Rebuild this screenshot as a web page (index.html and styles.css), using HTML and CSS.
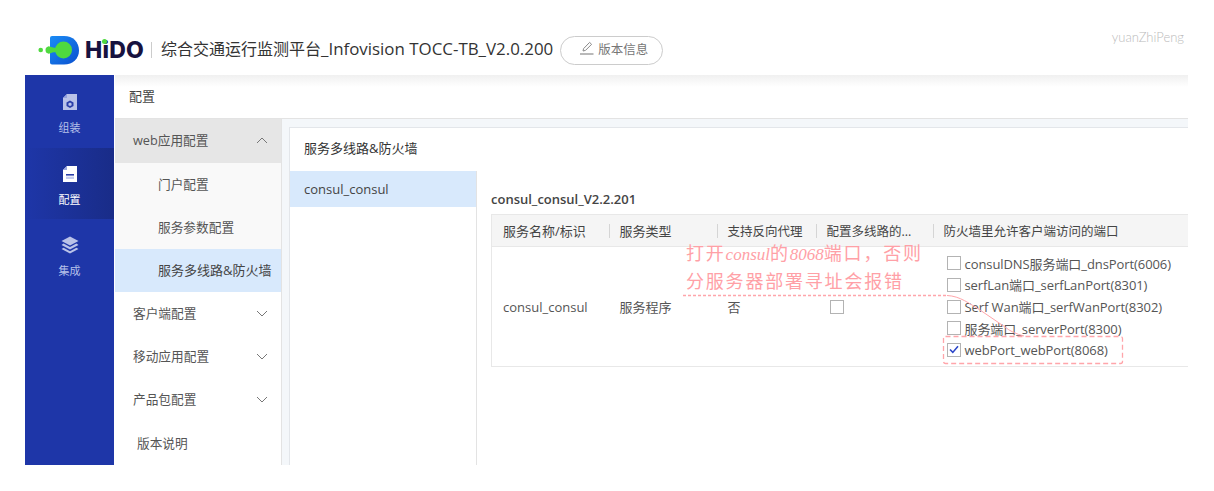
FILE: index.html
```html
<!DOCTYPE html>
<html lang="zh-CN">
<head>
    <meta charset="UTF-8">
    <meta name="viewport" content="width=device-width, initial-scale=1.0">
    <title>HiDO</title>
    <link rel="stylesheet" href="styles.css">
</head>
<body>
    <div class="page">
        <div class="header">
            <div class="logo">
                <svg class="logo-mark" width="42" height="32" viewBox="0 0 42 32">
                    <defs>
                        <linearGradient id="logo-blue" x1="0" y1="0" x2="1" y2="1">
                            <stop offset="0" stop-color="#1a8cf5"/>
                            <stop offset="1" stop-color="#0b50cf"/>
                        </linearGradient>
                    </defs>
                    <path d="M12 4 Q12 2 14 2 H26 C35 2 41 8 41 16.5 C41 24.5 35 30.5 26 30.5 H14 Q12 30.5 12 28.5 Z" fill="url(#logo-blue)"/>
                    <circle cx="25.5" cy="16" r="8.5" fill="#4fd93f"/>
                    <path d="M10 12.6 C13 13 15 14 19 14 V18 C15 18 13 19 10 19.4 Z" fill="#4fd93f"/>
                    <circle cx="11" cy="16" r="3.5" fill="#4fd93f"/>
                    <circle cx="2.7" cy="16" r="2.3" fill="#4fd93f"/>
                </svg>
                <span class="logo-text">HiDO</span>
                <span class="logo-dot"></span>
            </div>
            <span class="divider"></span>
            <span class="title">综合交通运行监测平台<span class="title-latin">_Infovision TOCC-TB_V2.0.200</span></span>
            <button class="version-btn">
                <svg width="15" height="15" viewBox="0 0 15 15" fill="none" stroke="#8a8a8a" stroke-width="1">
                    <path d="M4 10 L4.6 7.6 L10.6 1.4 L12.6 3.3 L6.5 9.4 Z"/>
                    <path d="M1 13 H14.5" stroke-width="1.2"/>
                </svg>
                版本信息
            </button>
            <span class="user">yuanZhiPeng</span>
        </div>

        <div class="app">
            <div class="sidebar">
                <a class="nav-item">
                    <svg width="18" height="18" viewBox="0 0 18 18">
                        <path d="M6 1 H16 V17 H2 V5 Z" fill="#b9c2e8"/>
                        <path d="M2 5 H6 V1 Z" fill="#93a1de"/>
                        <path d="M9 7.5 L12.5 9.5 V13 L9 15 L5.5 13 V9.5 Z" fill="#2a3ea8"/>
                        <path d="M9 9.6 L10.6 10.5 V12.2 L9 13 L7.4 12.2 V10.5 Z" fill="#b9c2e8"/>
                    </svg>
                    <span>组装</span>
                </a>
                <a class="nav-item active">
                    <svg width="18" height="18" viewBox="0 0 18 18">
                        <path d="M6 1 H16 V17 H2 V5 Z" fill="#fff"/>
                        <path d="M2 5 H6 V1 Z" fill="#9aa7e0"/>
                        <rect x="5" y="9" width="8" height="1.6" fill="#2a3ea8"/>
                        <rect x="5" y="11.6" width="8" height="2.4" fill="#c5cdee"/>
                    </svg>
                    <span>配置</span>
                </a>
                <a class="nav-item">
                    <svg width="18" height="18" viewBox="0 0 18 18" fill="#b9c2e8">
                        <path d="M9 0.5 L17.5 5 L9 9.5 L0.5 5 Z"/>
                        <path d="M2.6 7.6 L9 11 L15.4 7.6 L17.5 9 L9 13.5 L0.5 9 Z"/>
                        <path d="M2.6 11.8 L9 15.2 L15.4 11.8 L17.5 13 L9 17.5 L0.5 13 Z"/>
                    </svg>
                    <span>集成</span>
                </a>
            </div>

            <div class="main">
                <div class="topbar">配置</div>
                <div class="workspace">
                    <div class="menu">
                        <div class="menu-item open">web应用配置
                            <svg class="chevron" width="12" height="7" viewBox="0 0 12 7"><path d="M1 6 L6 1 L11 6"/></svg>
                        </div>
                        <div class="submenu">
                            <div class="sub-item">门户配置</div>
                            <div class="sub-item">服务参数配置</div>
                        </div>
                        <div class="sub-item current">服务多线路&amp;防火墙</div>
                        <div class="menu-item">客户端配置
                            <svg class="chevron" width="12" height="7" viewBox="0 0 12 7"><path d="M1 1 L6 6 L11 1"/></svg>
                        </div>
                        <div class="menu-item">移动应用配置
                            <svg class="chevron" width="12" height="7" viewBox="0 0 12 7"><path d="M1 1 L6 6 L11 1"/></svg>
                        </div>
                        <div class="menu-item">产品包配置
                            <svg class="chevron" width="12" height="7" viewBox="0 0 12 7"><path d="M1 1 L6 6 L11 1"/></svg>
                        </div>
                        <div class="menu-item plain">版本说明</div>
                    </div>

                    <div class="gutter">
                        <div class="card">
                            <div class="card-title">服务多线路&amp;防火墙</div>
                            <div class="card-body">
                                <div class="service-list">
                                    <div class="service-item">consul_consul</div>
                                </div>
                                <div class="detail">
                                    <div class="detail-title">consul_consul_V2.2.201</div>
                                    <table class="grid">
                                        <colgroup>
                                            <col class="col-name">
                                            <col class="col-type">
                                            <col class="col-proxy">
                                            <col class="col-multi">
                                            <col>
                                        </colgroup>
                                        <thead>
                                            <tr>
                                                <th>服务名称/标识</th>
                                                <th>服务类型</th>
                                                <th class="tight">支持反向代理</th>
                                                <th class="tight">配置多线路的...</th>
                                                <th class="tight">防火墙里允许客户端访问的端口</th>
                                            </tr>
                                        </thead>
                                        <tbody>
                                            <tr>
                                                <td>consul_consul</td>
                                                <td>服务程序</td>
                                                <td>否</td>
                                                <td class="multi"><span class="check"></span></td>
                                                <td class="ports">
                                                    <label class="port"><span class="check"></span>consulDNS服务端口_dnsPort(6006)</label>
                                                    <label class="port"><span class="check"></span>serfLan端口_serfLanPort(8301)</label>
                                                    <label class="port"><span class="check"></span>Serf Wan端口_serfWanPort(8302)</label>
                                                    <label class="port"><span class="check"></span>服务端口_serverPort(8300)</label>
                                                    <label class="port"><span class="check checked">
                                                        <svg width="10" height="9" viewBox="0 0 10 9" fill="none" stroke="#2b46c8" stroke-width="1.6"><path d="M1 4.5 L3.8 7.4 L9 1.2"/></svg>
                                                    </span>webPort_webPort(8068)</label>
                                                </td>
                                            </tr>
                                        </tbody>
                                    </table>
                                </div>
                            </div>
                        </div>
                    </div>
                </div>
            </div>
        </div>

        <!-- red pen notes drawn over the screenshot -->
        <div class="note">
            <div>打开<i>consul</i>的<i>8068</i>端口，否则</div>
            <div>分服务器部署寻址会报错</div>
        </div>
        <svg class="note-lines" width="1214" height="491" viewBox="0 0 1214 491" fill="none" stroke="#ffa5aa">
            <path d="M683 295.5 H947" stroke-width="1.3" stroke-dasharray="3 2"/>
            <path d="M947 295.5 C960 296 970 304 980 310 L1005 327 Q1012 333 1024 336"/>
            <rect x="943.5" y="336.5" width="179" height="27" rx="2" stroke-width="1.3" stroke-dasharray="5 3"/>
        </svg>
    </div>
</body>
</html>
```

FILE: styles.css
```css
* {
    box-sizing: border-box;
}
body {
    margin: 0;
    background-color: white;
    font-family: "Open Sans", "Noto Sans CJK SC", sans-serif;
    font-size: 13px;
    color: #555;
}
.page {
    position: relative;
    width: 1214px;
    height: 491px;
    padding: 25px 26px 26px 25px;
    overflow: hidden;
}
.header {
    display: flex;
    align-items: center;
    height: 50px;
    padding-left: 13px;
}
.logo {
    position: relative;
    display: flex;
    align-items: center;
    width: 113px;
}
.logo-text {
    margin-left: 5px;
    font-family: "Inter", sans-serif;
    font-size: 23px;
    font-weight: 800;
    letter-spacing: 0.2px;
    color: #17123f;
}
.logo-dot {
    position: absolute;
    left: 64px;
    top: 5px;
    width: 5px;
    height: 5px;
    border-radius: 50%;
    background-color: #4fd93f;
}
.divider {
    width: 1px;
    height: 16px;
    background-color: #ccc;
}
.title {
    margin-left: 9px;
    margin-bottom: 4px;
    font-size: 16px;
    color: #333;
    white-space: nowrap;
}
.title-latin {
    font-size: 16.9px;
}
.version-btn {
    display: flex;
    align-items: center;
    gap: 4px;
    height: 29px;
    width: 103px;
    margin-left: 7px;
    padding: 0 0 3px 18px;
    background-color: white;
    border: 1px solid #ccc;
    border-radius: 15px;
    font-family: inherit;
    font-size: 12.5px;
    color: #777;
}
.user {
    margin-left: auto;
    margin-right: 4px;
    margin-bottom: 26px;
    font-family: "Lato", sans-serif;
    font-size: 13px;
    font-weight: 300;
    color: #bbb;
}
.app {
    display: flex;
    height: 390px;
}
.sidebar {
    width: 89px;
    flex-shrink: 0;
    padding-top: 1px;
    background-color: #1e36a8;
}
.nav-item {
    display: flex;
    flex-direction: column;
    align-items: center;
    height: 71.5px;
    padding-top: 17px;
    color: #b6c1ea;
    font-size: 11px;
}
.nav-item span {
    margin-top: 8px;
}
.nav-item.active {
    background: linear-gradient(to right, #1e36a8, #192c88);
    color: white;
}
.main {
    flex: 1;
    min-width: 0;
    margin-left: 1px;
    display: flex;
    flex-direction: column;
}
.topbar {
    height: 44px;
    padding: 11px 0 0 14px;
    background: linear-gradient(#f0f0f0, white 12px);
    border-bottom: 1px solid #e3e3e3;
    color: #444;
    font-size: 13px;
}
.workspace {
    flex: 1;
    display: flex;
    min-height: 0;
}
.menu {
    width: 167px;
    flex-shrink: 0;
    border-right: 1px solid #e3e3e3;
    font-size: 12.7px;
}
.menu-item {
    display: flex;
    align-items: center;
    justify-content: space-between;
    height: 43.4px;
    padding: 0 13px 3px 18px;
    color: #555;
}
.menu-item.open {
    height: 44px;
    background-color: #e6e6e6;
}
.menu-item.plain {
    padding-left: 22px;
}
.chevron {
    fill: none;
    stroke: #777;
    stroke-width: 1;
    margin-top: 2px;
}
.submenu {
    background-color: #f9f9f9;
}
.sub-item {
    display: flex;
    align-items: center;
    height: 43px;
    padding: 0 0 3px 43px;
    color: #555;
}
.sub-item.current {
    background-color: #d8e9fc;
    color: #444;
    font-size: 13px;
}
.gutter {
    flex: 1;
    min-width: 0;
    padding: 8px 0 0 7px;
    background-color: #f4f7fa;
}
.card {
    height: 100%;
    background-color: white;
    border-top: 1px solid #e3e6ea;
    border-left: 1px solid #e3e6ea;
    overflow: hidden;
}
.card-title {
    height: 43px;
    padding: 10px 0 0 14px;
    color: #333;
}
.card-body {
    display: flex;
    height: 294px;
}
.service-list {
    width: 187px;
    flex-shrink: 0;
    border-right: 1px solid #e3e3e3;
}
.service-item {
    height: 36px;
    padding: 9px 0 0 14px;
    background-color: #d8e9fc;
    color: #444;
}
.detail {
    flex: 1;
    min-width: 0;
    padding: 19px 0 0 14px;
}
.detail-title {
    height: 24px;
    font-weight: 600;
    color: #444;
}
.grid {
    width: 720px;
    table-layout: fixed;
    border-collapse: collapse;
    border: 1px solid #e8e8e8;
    color: #555;
}
.col-name {
    width: 117px;
}
.col-type {
    width: 108px;
}
.col-proxy {
    width: 99px;
}
.col-multi {
    width: 117px;
}
.grid th {
    position: relative;
    height: 32px;
    padding: 0 0 0 11px;
    background-color: #f5f5f5;
    border-bottom: 1px solid #e8e8e8;
    font-weight: normal;
    text-align: left;
    white-space: nowrap;
    color: #444;
}
.grid th.tight {
    font-size: 12.5px;
}
.grid th + th::before {
    content: "";
    position: absolute;
    left: 0;
    top: 9px;
    width: 1px;
    height: 14px;
    background-color: #d5d5d5;
}
.grid td {
    height: 120px;
    padding: 0 0 0 11px;
    vertical-align: middle;
}
.grid td.multi {
    padding-left: 14px;
}
.grid td.multi .check {
    display: flex;
}
.grid td.ports {
    padding: 0 0 0 14px;
    letter-spacing: -0.08px;
}
.port {
    display: flex;
    align-items: center;
    height: 21.7px;
    white-space: nowrap;
}
.check {
    display: inline-flex;
    align-items: center;
    justify-content: center;
    width: 14px;
    height: 14px;
    background-color: white;
    border: 1px solid #b3b3b3;
}
.port .check {
    margin-right: 4px;
}
.note {
    position: absolute;
    left: 686px;
    top: 240px;
    color: #ffa0a6;
    font-size: 18px;
    line-height: 27px;
    letter-spacing: 1.8px;
    white-space: nowrap;
}
.note i {
    font-family: "Liberation Serif", serif;
    font-size: 17px;
    letter-spacing: 0;
}
.note-lines {
    position: absolute;
    left: 0;
    top: 0;
    pointer-events: none;
}
```
